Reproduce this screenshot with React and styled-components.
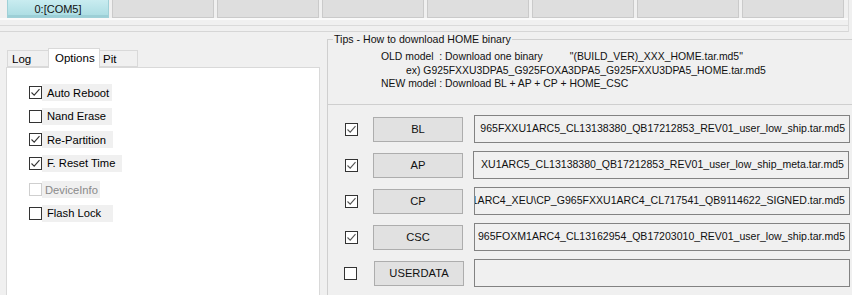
import React from "react";
import styled, { createGlobalStyle } from "styled-components";

const Global = createGlobalStyle`
  html, body { margin: 0; padding: 0; background: #f0f0f0; }
  body { font-family: "Liberation Sans", Arial, sans-serif; font-size: 11px; color: #000; overflow: hidden; }
  * { box-sizing: border-box; }
`;

const Window = styled.div`
  width: 852px;
  height: 295px;
  overflow: hidden;
  background: #f0f0f0;
`;

const SlotFrame = styled.div`
  width: 849px;
  height: 32px;
  border-right: 1px solid #dcdcdc;
  border-bottom: 1px solid #d6d6d6;
`;

const SlotRow = styled.div`
  display: flex;
  gap: 3px;
  padding-left: 7px;
  height: 20px;
  border-bottom: 2px solid #fafafa;
`;

const Slot = styled.div`
  width: 102px;
  height: 18px;
  display: flex;
  align-items: center;
  justify-content: center;
  font-size: 11px;
  color: #111;
  background: ${(p) => (p.$active ? "linear-gradient(#c9ecf0, #aadce2)" : "#dedede")};
  border: 1px solid ${(p) => (p.$active ? "#9fd0d7" : "#cacaca")};
  border-top: none;
  box-shadow: ${(p) => (p.$active ? "inset 0 -2px 0 #9ccfd6" : "none")};
`;

const SlotDivider = styled.div`
  height: 1px;
  margin-top: 5px;
  background: #dadada;
`;

const Main = styled.div`
  display: flex;
  margin-top: 1px;
`;

const Left = styled.div`
  width: 327px;
  padding-left: 6px;
  padding-top: 13px;
  flex-shrink: 0;
`;

const Tabs = styled.div`
  display: flex;
  align-items: flex-end;
  height: 21px;
  padding-left: 1px;
`;

const Tab = styled.div`
  width: ${(p) => p.$w}px;
  height: ${(p) => (p.$active ? 20 : 17)}px;
  display: flex;
  align-items: ${(p) => (p.$active ? "flex-start" : "center")};
  padding-top: ${(p) => (p.$active ? "3px" : "0")};
  padding-left: ${(p) => p.$pl}px;
  font-size: 11.5px;
  background: ${(p) => (p.$active ? "#fff" : "#f0f0f0")};
  border: 1px solid #d9d9d9;
  border-bottom: ${(p) => (p.$active ? "none" : "1px solid #d9d9d9")};
  margin-bottom: ${(p) => (p.$active ? "-1px" : "0")};
  position: relative;
  z-index: ${(p) => (p.$active ? 2 : 1)};
  margin-left: ${(p) => (p.$ml ? p.$ml : 0)}px;
`;

const Panel = styled.div`
  width: 314px;
  height: 240px;
  background: #fff;
  border: 1px solid #d9d9d9;
  padding: 16px 0 0 22px;
  display: flex;
  flex-direction: column;
  gap: 6.5px;
`;

const OptionRow = styled.label`
  display: flex;
  align-items: center;
  height: 17px;
  margin-top: ${(p) => p.$mt || 0}px;
`;

const Box = styled.span`
  width: 13px;
  height: 13px;
  flex-shrink: 0;
  border: 1px solid ${(p) => (p.$disabled ? "#cfcfcf" : "#333")};
  background: #fff;
  display: flex;
  align-items: center;
  justify-content: center;
`;

const OptionLabel = styled.span`
  height: 17px;
  width: ${(p) => p.$w}px;
  background: #f0f0f0;
  display: flex;
  align-items: center;
  padding-left: ${(p) => (p.$disabled ? 3 : 5)}px;
  font-size: 11.2px;
  color: ${(p) => (p.$disabled ? "#8a8a8a" : "#000")};
  white-space: nowrap;
`;

const Right = styled.div`
  flex: 1;
  display: flex;
  flex-direction: column;
`;

const Tips = styled.fieldset`
  margin: 0;
  height: 72px;
  padding: 0;
  border: 1px solid #cfcfcf;
  border-right: none;
`;

const TipsLegend = styled.legend`
  padding: 0 1px;
  margin-left: 5px;
  font-size: 10.6px;
  line-height: 13px;
  color: #111;
`;

const TipBody = styled.div`
  padding: 4px 0 0 53px;
`;

const TipLine = styled.div`
  display: flex;
  font-size: 10.4px;
  line-height: 13.5px;
  white-space: pre;
  padding-left: ${(p) => p.$indent || 0}px;
  color: #111;
`;

const TipQuote = styled.span`
  margin-left: 27px;
`;

const Files = styled.div`
  flex: 1;
  border-left: 1px solid #cfcfcf;
  padding: 10px 0 0 16px;
  display: flex;
  flex-direction: column;
  gap: 8px;
`;

const FileRow = styled.div`
  display: flex;
  align-items: center;
  height: 28px;
`;

const FileCheck = styled(Box)`
  margin-left: ${(p) => p.$ml || 0}px;
  border-color: #333;
`;

const FileButton = styled.div`
  width: 90px;
  height: 25px;
  margin-left: ${(p) => p.$ml}px;
  display: flex;
  align-items: center;
  justify-content: center;
  background: #e1e1e1;
  border: 1px solid #adadad;
  font-size: 11.2px;
  color: #111;
`;

const PathField = styled.div`
  height: 28px;
  width: 376px;
  margin-left: ${(p) => p.$ml}px;
  background: #f0f0f0;
  border: 1px solid #828282;
  display: flex;
  justify-content: flex-end;
  overflow: hidden;
  padding: 5px 4px 0 1px;
  font-size: 10.55px;
  line-height: 14px;
  white-space: nowrap;
  color: #111;
`;

const Check = ({ color = "#333" }) => (
  <svg width="11" height="11" viewBox="0 0 11 11">
    <path d="M1.5 5.5 L4.2 8.2 L9.5 2.2" fill="none" stroke={color} strokeWidth="1.1" />
  </svg>
);

const options = [
  { label: "Auto Reboot", checked: true, w: 70 },
  { label: "Nand Erase", checked: false, w: 70 },
  { label: "Re-Partition", checked: true, w: 71 },
  { label: "F. Reset Time", checked: true, w: 80 },
  { label: "DeviceInfo", checked: false, w: 58, disabled: true, mt: 3 },
  { label: "Flash Lock", checked: false, w: 71 },
];

const files = [
  { name: "BL", checked: true, path: "965FXXU1ARC5_CL13138380_QB17212853_REV01_user_low_ship.tar.md5", cm: 1, bm: 15, pm: 11 },
  { name: "AP", checked: true, path: "XU1ARC5_CL13138380_QB17212853_REV01_user_low_ship_meta.tar.md5", cm: 1, bm: 15, pm: 10 },
  { name: "CP", checked: true, path: "1ARC4_XEU\\CP_G965FXXU1ARC4_CL717541_QB9114622_SIGNED.tar.md5", cm: 1, bm: 15, pm: 11 },
  { name: "CSC", checked: true, path: "965FOXM1ARC4_CL13162954_QB17203010_REV01_user_low_ship.tar.md5", cm: 1, bm: 15, pm: 11 },
  { name: "USERDATA", checked: false, path: "", cm: 0, bm: 17, pm: 10 },
];

export default function App() {
  return (
    <Window>
      <Global />
      <SlotFrame>
        <SlotRow>
          <Slot $active>0:[COM5]</Slot>
          {Array.from({ length: 7 }).map((_, i) => (
            <Slot key={i} />
          ))}
        </SlotRow>
        <SlotDivider />
      </SlotFrame>
      <Main>
        <Left>
          <Tabs>
            <Tab $w={42} $pl={4}>Log</Tab>
            <Tab $w={52} $pl={6} $active $ml={-1}>Options</Tab>
            <Tab $w={39} $pl={3} $ml={-1}>Pit</Tab>
          </Tabs>
          <Panel>
            {options.map((o) => (
              <OptionRow key={o.label} $mt={o.mt}>
                <Box $disabled={o.disabled}>{o.checked && <Check />}</Box>
                <OptionLabel $w={o.w} $disabled={o.disabled}>{o.label}</OptionLabel>
              </OptionRow>
            ))}
          </Panel>
        </Left>
        <Right>
          <Tips>
            <TipsLegend>Tips - How to download HOME binary</TipsLegend>
            <TipBody>
              <TipLine>
                OLD model  : Download one binary
                <TipQuote>"(BUILD_VER)_XXX_HOME.tar.md5"</TipQuote>
              </TipLine>
              <TipLine $indent={25}>ex) G925FXXU3DPA5_G925FOXA3DPA5_G925FXXU3DPA5_HOME.tar.md5</TipLine>
              <TipLine>NEW model : Download BL + AP + CP + HOME_CSC</TipLine>
            </TipBody>
          </Tips>
          <Files>
            {files.map((f) => (
              <FileRow key={f.name}>
                <FileCheck $ml={f.cm}>{f.checked && <Check color="#555" />}</FileCheck>
                <FileButton $ml={f.bm}>{f.name}</FileButton>
                <PathField $ml={f.pm}>{f.path}</PathField>
              </FileRow>
            ))}
          </Files>
        </Right>
      </Main>
    </Window>
  );
}
